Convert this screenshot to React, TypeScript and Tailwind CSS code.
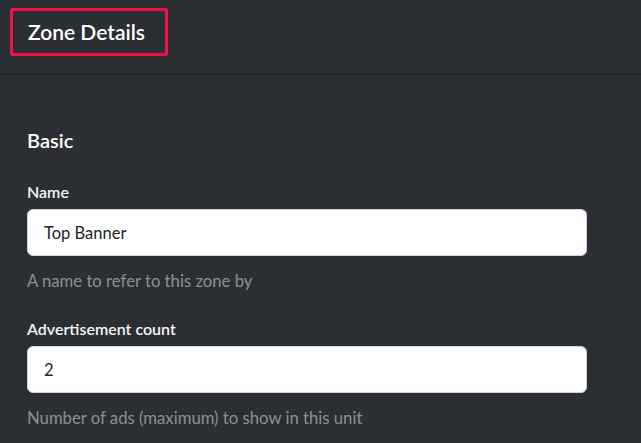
import React from "react";

const Field = ({ label, value, help }: { label: string; value: string; help: string }) => (
  <div className="flex flex-col">
    <label className="text-[16px] font-semibold leading-[20px] text-[#f4f5f6]">{label}</label>
    <input
      readOnly
      value={value}
      className="mt-[7px] h-[47px] w-[560px] rounded-[6px] border border-[#ced4da] bg-white px-4 text-[16.5px] text-[#212529] outline-none"
    />
    <p className="mt-[15px] text-[16.7px] leading-[20px] text-[#8b8f93]">{help}</p>
  </div>
);

export default function App() {
  return (
    <div
      className="min-h-[443px] w-full bg-[#2b2f33]"
      style={{ fontFamily: "Lato, 'Noto Sans', sans-serif" }}
    >
      <header className="flex h-[75px] items-start border-b border-[#1c1f22] px-[10px] pt-[8px]">
        <div className="flex h-[48px] w-[158px] items-center rounded-[3px] border-[3px] border-[#f0124a] pl-[15px]">
          <h1 className="text-[21px] font-semibold text-white">Zone Details</h1>
        </div>
      </header>
      <main className="px-[27px] pt-[53px]">
        <h2 className="text-[20px] font-semibold leading-[24px] text-white">Basic</h2>
        <div className="mt-[30px] flex flex-col gap-[28px]">
          <Field label="Name" value="Top Banner" help="A name to refer to this zone by" />
          <Field label="Advertisement count" value="2" help="Number of ads (maximum) to show in this unit" />
        </div>
      </main>
    </div>
  );
}
